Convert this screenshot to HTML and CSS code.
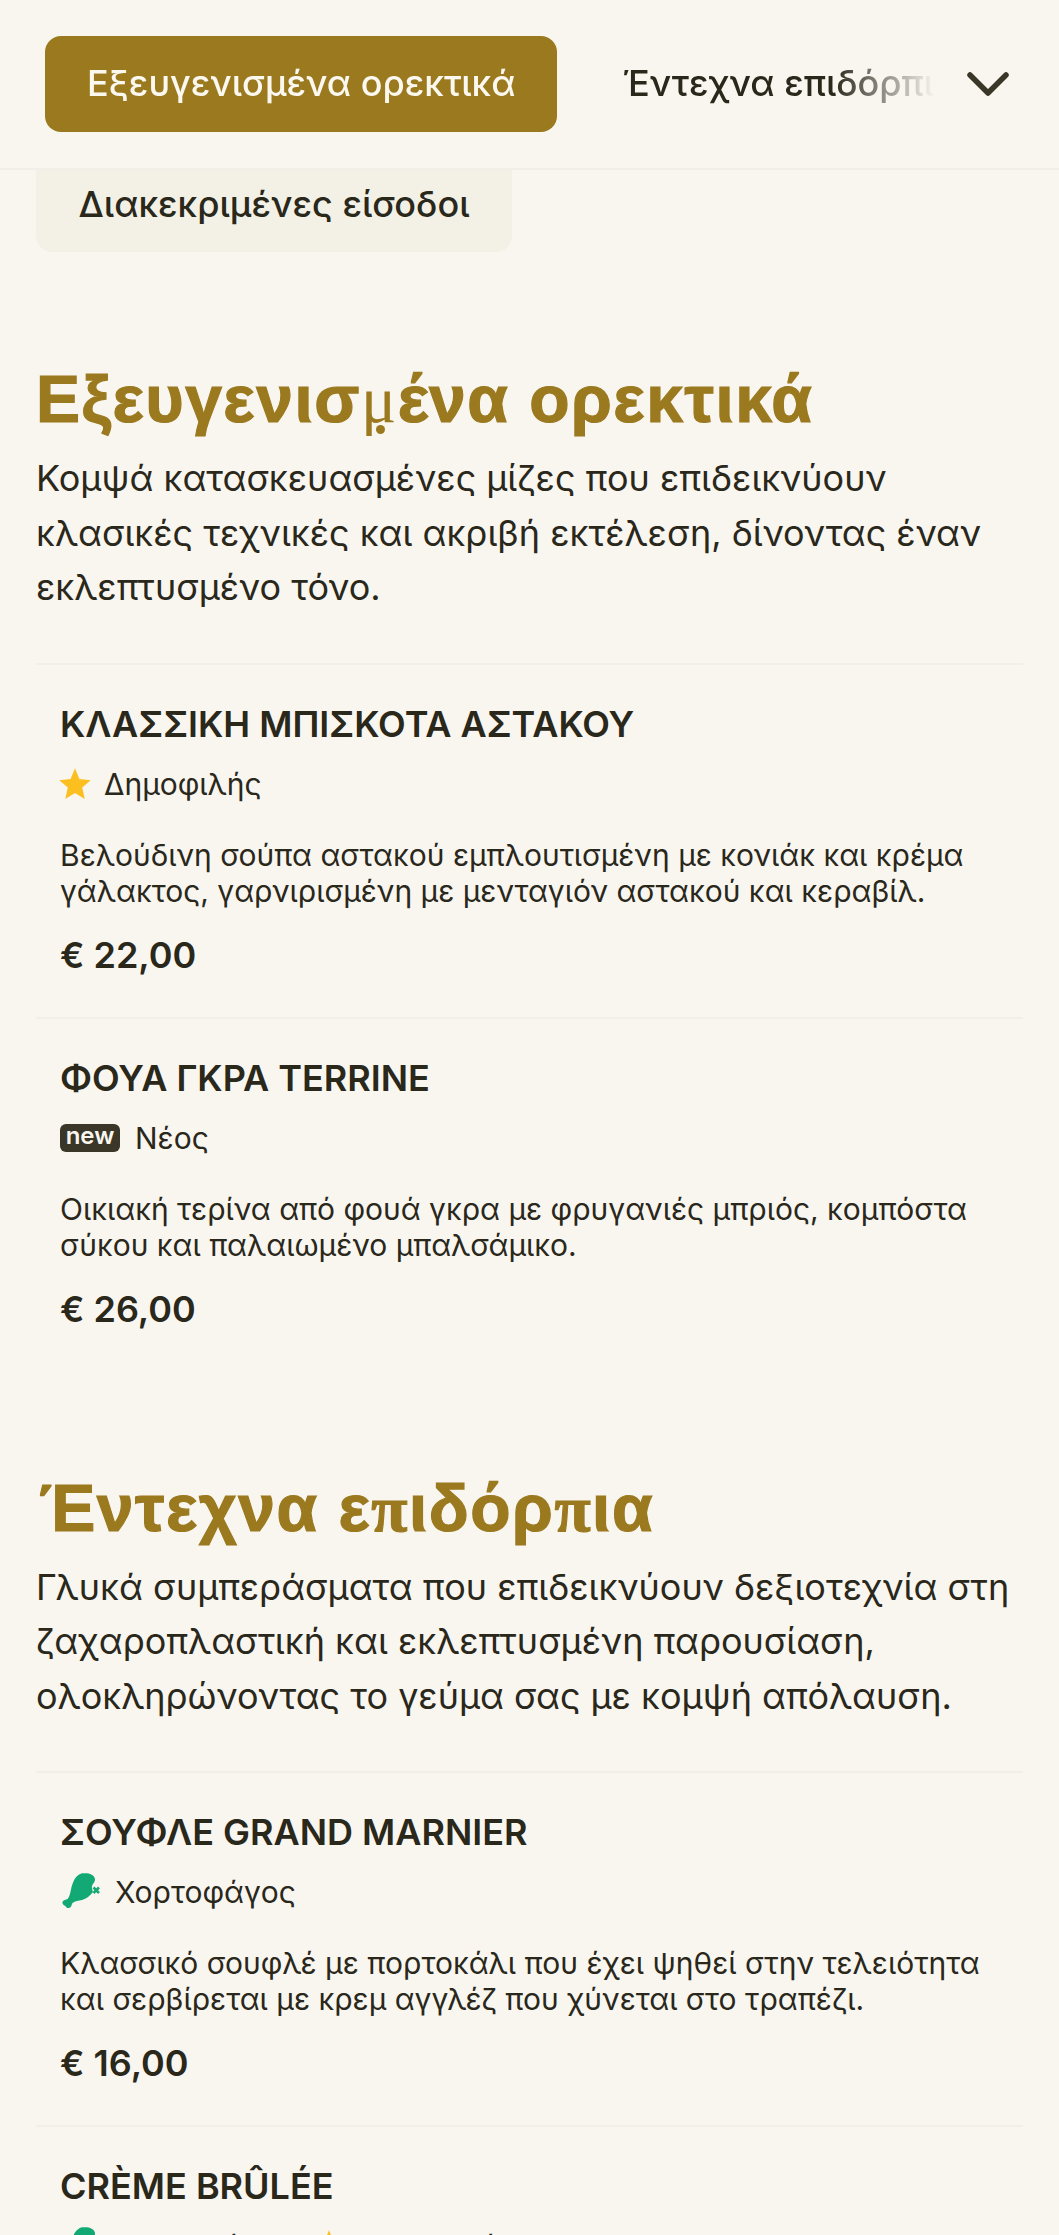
FILE: index.html
```html
<!DOCTYPE html>
<html lang="el">
<head>
    <meta charset="UTF-8">
    <meta name="viewport" content="width=device-width, initial-scale=1.0">
    <title>Μενού</title>
    <link rel="stylesheet" href="styles.css">
</head>
<body>
<div class="page">
    <nav class="category-nav">
        <div class="category-tabs">
            <button class="tab tab-active">Εξευγενισμένα ορεκτικά</button>
            <button class="tab">Έντεχνα επιδόρπια</button>
        </div>
        <svg class="chevron" viewBox="0 0 42 26" fill="none" stroke="currentColor" stroke-width="5.5" stroke-linecap="round" stroke-linejoin="round">
            <path d="M3 4l18 18L39 4"></path>
        </svg>
    </nav>

    <div class="sub-tabs">
        <button class="sub-tab">Διακεκριμένες είσοδοι</button>
    </div>

    <section class="menu-section">
        <h2 class="section-title">Εξευγενισ<span class="alt-mu">μ</span>ένα ορεκτικά</h2>
        <p class="section-desc">Κομψά κατασκευασμένες μίζες που επιδεικνύουν κλασικές τεχνικές και ακριβή εκτέλεση, δίνοντας έναν εκλεπτυσμένο τόνο.</p>

        <article class="dish">
            <h3 class="dish-name">ΚΛΑΣΣΙΚΗ ΜΠΙΣΚΟΤΑ ΑΣΤΑΚΟΥ</h3>
            <div class="dish-tags">
                <span class="tag">
                    <svg class="icon-star" viewBox="0 0 24 24"><path d="M12 .2l3.3 8.1 8.5.8-6.4 5.6 1.9 8.5L12 18.7l-7.3 4.5 1.9-8.5L.2 9.1l8.5-.8z"></path></svg>
                    Δημοφιλής
                </span>
            </div>
            <p class="dish-desc">Βελούδινη σούπα αστακού εμπλουτισμένη με κονιάκ και κρέμα γάλακτος, γαρνιρισμένη με μενταγιόν αστακού και κεραβίλ.</p>
            <div class="dish-price">€ 22,00</div>
        </article>

        <article class="dish">
            <h3 class="dish-name">ΦΟΥΑ ΓΚΡΑ TERRINE</h3>
            <div class="dish-tags">
                <span class="tag"><span class="badge-new">new</span> Νέος</span>
            </div>
            <p class="dish-desc">Οικιακή τερίνα από φουά γκρα με φρυγανιές μπριός, κομπόστα σύκου και παλαιωμένο μπαλσάμικο.</p>
            <div class="dish-price">€ 26,00</div>
        </article>
    </section>

    <section class="menu-section">
        <h2 class="section-title"><span class="alt-tonos">Έ</span>ντεχνα ε<span class="alt-pi">π</span>ιδόρ<span class="alt-pi">π</span>ια</h2>
        <p class="section-desc">Γλυκά συμπεράσματα που επιδεικνύουν δεξιοτεχνία στη ζαχαροπλαστική και εκλεπτυσμένη παρουσίαση, ολοκληρώνοντας το γεύμα σας με κομψή απόλαυση.</p>

        <article class="dish">
            <h3 class="dish-name">ΣΟΥΦΛΕ GRAND MARNIER</h3>
            <div class="dish-tags">
                <span class="tag">
                    <svg class="icon-veg" viewBox="0 0 40 38"><path d="M23 .5c5-.8 11.5 1 12 5.8.3 2.7-2.5 4.2-3 6.7-.4 2.2.3 4 1 6-2.5 3.5-7 7-11 8-3.5.9-7 1-9.5 3-1 1-.6 3-2 4.3-1.8 1.6-4.5.6-5-1.4-2-.3-3.7-2.5-2.8-4.5 1-2 3.3-1.5 4.8-2.5 2-2 2.5-5.5 3.5-9.5 1.2-5 3.5-15 12-16.400z"></path><path class="veg-cross" d="M33.5 14.5l5.5 5.5m0-5.5L33.5 20"></path></svg>
                    Χορτοφάγος
                </span>
            </div>
            <p class="dish-desc">Κλασσικό σουφλέ με πορτοκάλι που έχει ψηθεί στην τελειότητα και σερβίρεται με κρεμ αγγλέζ που χύνεται στο τραπέζι.</p>
            <div class="dish-price">€ 16,00</div>
        </article>

        <article class="dish">
            <h3 class="dish-name">CRÈME BRÛLÉE</h3>
            <div class="dish-tags">
                <span class="tag">
                    <svg class="icon-veg" viewBox="0 0 40 38"><path d="M23 .5c5-.8 11.5 1 12 5.8.3 2.7-2.5 4.2-3 6.7-.4 2.2.3 4 1 6-2.5 3.5-7 7-11 8-3.5.9-7 1-9.5 3-1 1-.6 3-2 4.3-1.8 1.6-4.5.6-5-1.4-2-.3-3.7-2.5-2.8-4.5 1-2 3.3-1.5 4.8-2.5 2-2 2.5-5.5 3.5-9.5 1.2-5 3.5-15 12-16.400z"></path><path class="veg-cross" d="M33.5 14.5l5.5 5.5m0-5.5L33.5 20"></path></svg>
                    Χορτοφάγος
                </span>
                <span class="tag">
                    <svg class="icon-star" viewBox="0 0 24 24"><path d="M12 .2l3.3 8.1 8.5.8-6.4 5.6 1.9 8.5L12 18.7l-7.3 4.5 1.9-8.5L.2 9.1l8.5-.8z"></path></svg>
                    Δημοφιλής
                </span>
            </div>
        </article>
    </section>
</div>
</body>
</html>
```

FILE: styles.css
```css
:root {
    --gold-color: #9b791f;
    --background-color: #f9f6f0;
    --text-color: #2a271b;
    --line-color: #f2efe8;
    --pill-color: #f3f1e6;
    --veg-color: #12a974;
    --star-color: #fbbf1f;
}

* {
    box-sizing: border-box;
}

html, body {
    margin: 0;
    padding: 0;
}

body {
    font-family: Inter, "Noto Sans", sans-serif;
    background-color: var(--background-color);
    color: var(--text-color);
}

.page {
    height: 100vh;
    overflow: hidden;
}

.category-nav {
    position: relative;
    z-index: 2;
    display: flex;
    align-items: center;
    height: 170px;
    background-color: var(--background-color);
    border-bottom: 2px solid var(--line-color);
}

.category-tabs {
    display: flex;
    align-items: center;
    gap: 23px;
    width: 935px;
    padding-left: 45px;
    overflow: hidden;
    -webkit-mask-image: linear-gradient(to right, #000 833px, transparent 935px);
    mask-image: linear-gradient(to right, #000 833px, transparent 935px);
}

.tab {
    flex-shrink: 0;
    height: 96px;
    padding: 0 42px 3px;
    border: none;
    border-radius: 16px;
    background: none;
    color: var(--text-color);
    font-family: inherit;
    font-size: 36px;
    font-weight: 500;
    white-space: nowrap;
}

.tab-active {
    background-color: var(--gold-color);
    color: #fbf8f0;
}

.chevron {
    width: 44px;
    height: 26px;
    margin-left: 31px;
    color: #3a3728;
}

.sub-tabs {
    display: flex;
    margin-top: -14px;
    padding: 0 36px;
}

.sub-tab {
    width: 476px;
    height: 96px;
    padding-bottom: 2px;
    border: none;
    border-radius: 16px;
    background-color: var(--pill-color);
    color: var(--text-color);
    font-family: inherit;
    font-size: 36px;
    font-weight: 500;
    white-space: nowrap;
}

.menu-section {
    padding: 0 36px;
}

.menu-section + .menu-section {
    margin-top: 98px;
}

.sub-tabs + .menu-section {
    margin-top: 108px;
}

.section-title {
    margin: 0 0 12px;
    color: var(--gold-color);
    font-family: "Liberation Sans", Arial, sans-serif;
    font-size: 66px;
    font-weight: 700;
    line-height: 78px;
    letter-spacing: 1.5px;
    -webkit-text-stroke: 1.2px var(--gold-color);
}

.alt-mu {
    position: relative;
    font-family: "Liberation Serif", serif;
    font-weight: 400;
    -webkit-text-stroke: 0;
}

.alt-mu::after {
    content: "";
    position: absolute;
    left: 15px;
    bottom: 2px;
    width: 9px;
    height: 9px;
    border-radius: 50%;
    background-color: var(--gold-color);
}

.alt-pi {
    font-family: "Liberation Serif", serif;
}

.alt-tonos {
    padding-left: 3px;
}

.section-desc {
    margin: 0 0 48px;
    font-size: 36px;
    line-height: 54.5px;
}

.dish {
    height: 354px;
    padding: 37px 24px 0;
    border-top: 2px solid var(--line-color);
}

.dish-name {
    margin: 0;
    font-size: 36px;
    font-weight: 600;
    line-height: 44px;
}

.dish-tags {
    display: flex;
    gap: 18px;
    margin-top: 16px;
    height: 44px;
}

.tag {
    display: flex;
    align-items: center;
    gap: 15px;
    font-size: 30px;
}

.icon-star {
    width: 32px;
    height: 32px;
    margin-right: -2px;
    margin-left: -1px;
    fill: var(--star-color);
}

.icon-veg {
    width: 40px;
    height: 38px;
    fill: var(--veg-color);
}

.veg-cross {
    fill: none;
    stroke: var(--veg-color);
    stroke-width: 2.5;
}

.badge-new {
    width: 60px;
    height: 28px;
    border-radius: 6px;
    background-color: #3a3728;
    color: #f9f6f0;
    font-size: 24px;
    font-weight: 600;
    line-height: 24px;
    text-align: center;
}

.dish-desc {
    margin: 31px 0 0;
    font-size: 30px;
    line-height: 36px;
}

.dish-price {
    margin-top: 24px;
    font-size: 36px;
    font-weight: 600;
    line-height: 44px;
}
```
